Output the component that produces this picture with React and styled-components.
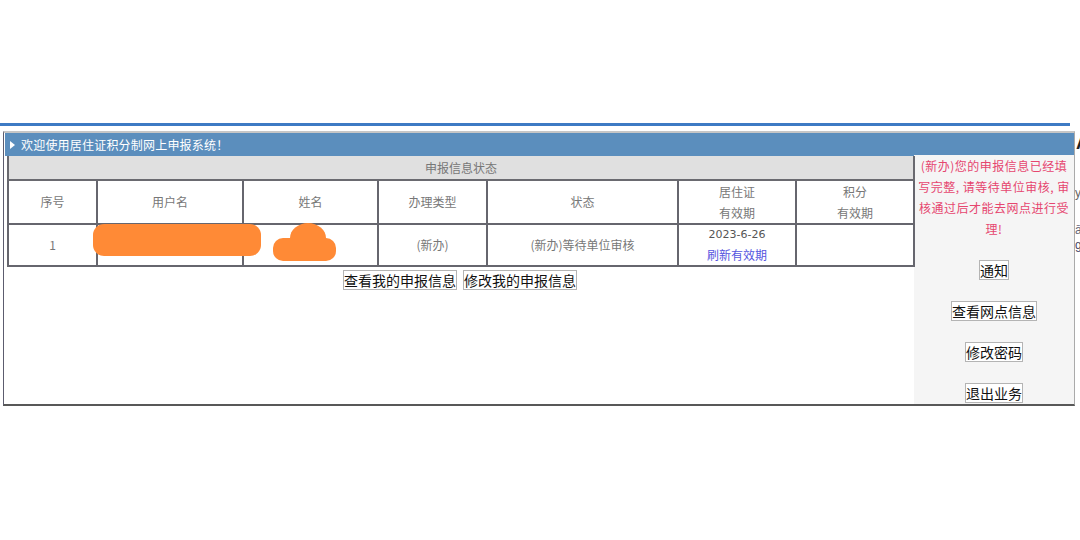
import React from "react";
import styled, { createGlobalStyle } from "styled-components";

const Global = createGlobalStyle`
  html, body { margin: 0; padding: 0; background: #ffffff; }
  body { font-family: "Noto Sans CJK SC", "DejaVu Sans", sans-serif; }
  * { box-sizing: border-box; }
`;

const Page = styled.div`
  width: 1080px;
  height: 540px;
  padding-top: 123px;
  overflow: hidden;
`;

const TopRule = styled.div`
  width: 1070px;
  height: 3px;
  background: #3d7ac4;
`;

const FrameRow = styled.div`
  display: flex;
  align-items: flex-start;
  margin-top: 5px;
`;

const Frame = styled.div`
  margin-left: 3px;
  width: 1072px;
  border-left: 1px solid #5c5c6e;
  border-right: 1px solid #aaaaaa;
  border-top: 2px solid #c6c6c6;
  border-bottom: 2px solid #585858;
  padding-left: 1px;
`;

const Edge = styled.div`
  width: 5px;
  height: 290px;
  overflow: hidden;
  position: relative;
  font-family: "Liberation Sans", sans-serif;
`;

const EdgeGlyph = styled.span`
  position: absolute;
  left: ${(p) => p.$x}px;
  top: ${(p) => p.$y}px;
  font-size: ${(p) => p.$size}px;
  color: ${(p) => p.$color};
  font-weight: ${(p) => (p.$bold ? 700 : 400)};
`;

const HeaderBar = styled.div`
  height: 23px;
  background: #5b8ebd;
  color: #ffffff;
  font-size: 12px;
  letter-spacing: 0.2px;
  display: flex;
  align-items: center;
  padding-left: 5px;
  gap: 6px;
`;

const Arrow = styled.span`
  width: 0;
  height: 0;
  border-top: 4px solid transparent;
  border-bottom: 4px solid transparent;
  border-left: 5px solid #ffffff;
`;

const Body = styled.div`
  display: flex;
  height: 248px;
`;

const Main = styled.div`
  width: 909px;
  padding-left: 2px;
  display: flex;
  flex-direction: column;
`;

const TableWrap = styled.div`
  position: relative;
  width: 906px;
`;

const Table = styled.table`
  width: 906px;
  border-collapse: collapse;
  table-layout: fixed;
  font-size: 12px;
  color: #777777;
  text-align: center;
`;

const TitleCell = styled.td`
  height: 24px;
  background: #e0e0e0;
  border: 2px solid #6a6a70;
  border-top: none;
  padding: 0;
  line-height: 20px;
`;

const Cell = styled.td`
  height: ${(p) => p.$h}px;
  border: 2px solid #66666e;
  padding: 0;
  line-height: ${(p) => p.$lh || 20}px;
  color: ${(p) => p.$color || "#777777"};
`;

const DateText = styled.div`
  color: #555555;
  font-family: "DejaVu Sans", sans-serif;
  font-size: 11px;
  line-height: 20px;
`;

const RefreshLink = styled.a`
  display: block;
  color: #5555e0;
  text-decoration: none;
  line-height: 20px;
  cursor: pointer;
`;

const Redaction = styled.div`
  position: absolute;
  left: ${(p) => p.$l}px;
  top: ${(p) => p.$t}px;
  width: ${(p) => p.$w}px;
  height: ${(p) => p.$h}px;
  border-radius: ${(p) => p.$r};
  background: #ff8a36;
`;

const ActionRow = styled.div`
  width: 906px;
  display: flex;
  justify-content: center;
  gap: 6px;
  margin-top: 3px;
`;

const Btn = styled.button`
  font-family: "Noto Sans CJK SC", sans-serif;
  font-size: 14px;
  height: 20px;
  line-height: 18px;
  padding: 0;
  border: 1px solid #b4b4b4;
  background: #ffffff;
  color: #111111;
  border-radius: 0;
`;

const Panel = styled.div`
  width: 160px;
  margin-top: -1px;
  background: #f5f5f5;
  display: flex;
  flex-direction: column;
  align-items: center;
`;

const Notice = styled.p`
  margin: 0;
  width: 160px;
  text-align: center;
  color: #e6466f;
  font-size: 12px;
  letter-spacing: 0.5px;
  line-height: 21px;
  white-space: nowrap;
`;

const PanelButtons = styled.div`
  margin-top: 21px;
  display: flex;
  flex-direction: column;
  align-items: center;
  gap: 21px;
`;

export default function App() {
  return (
    <Page>
      <Global />
      <TopRule />
      <FrameRow>
        <Frame>
          <HeaderBar>
            <Arrow />
            <span>欢迎使用居住证积分制网上申报系统！</span>
          </HeaderBar>
          <Body>
            <Main>
              <TableWrap>
                <Table>
                  <colgroup>
                    <col style={{ width: 89 }} />
                    <col style={{ width: 146 }} />
                    <col style={{ width: 135 }} />
                    <col style={{ width: 109 }} />
                    <col style={{ width: 191 }} />
                    <col style={{ width: 118 }} />
                    <col style={{ width: 118 }} />
                  </colgroup>
                  <tbody>
                    <tr>
                      <TitleCell colSpan={7}>申报信息状态</TitleCell>
                    </tr>
                    <tr>
                      <Cell $h={42}>序号</Cell>
                      <Cell $h={42}>用户名</Cell>
                      <Cell $h={42}>姓名</Cell>
                      <Cell $h={42}>办理类型</Cell>
                      <Cell $h={42}>状态</Cell>
                      <Cell $h={42} $lh={21}>
                        居住证
                        <br />
                        有效期
                      </Cell>
                      <Cell $h={42} $lh={21}>
                        积分
                        <br />
                        有效期
                      </Cell>
                    </tr>
                    <tr>
                      <Cell $h={41}>1</Cell>
                      <Cell $h={41}></Cell>
                      <Cell $h={41}></Cell>
                      <Cell $h={41}>(新办)</Cell>
                      <Cell $h={41}>(新办)等待单位审核</Cell>
                      <Cell $h={41}>
                        <DateText>2023-6-26</DateText>
                        <RefreshLink>刷新有效期</RefreshLink>
                      </Cell>
                      <Cell $h={41}></Cell>
                    </tr>
                  </tbody>
                </Table>
                <Redaction $l={86} $t={68} $w={168} $h={32} $r="11px" />
                <Redaction $l={283} $t={67} $w={36} $h={30} $r="50%" />
                <Redaction $l={266} $t={82} $w={63} $h={23} $r="10px" />
              </TableWrap>
              <ActionRow>
                <Btn>查看我的申报信息</Btn>
                <Btn>修改我的申报信息</Btn>
              </ActionRow>
            </Main>
            <Panel>
              <Notice>
                (新办)您的申报信息已经填
                <br />
                写完整, 请等待单位审核, 审
                <br />
                核通过后才能去网点进行受
                <br />
                理!
              </Notice>
              <PanelButtons>
                <Btn>通知</Btn>
                <Btn>查看网点信息</Btn>
                <Btn>修改密码</Btn>
                <Btn>退出业务</Btn>
              </PanelButtons>
            </Panel>
          </Body>
        </Frame>
        <Edge>
          <EdgeGlyph $x={1} $y={2} $size={18} $color="#222" $bold>A</EdgeGlyph>
          <EdgeGlyph $x={0} $y={55} $size={12} $color="#666">y</EdgeGlyph>
          <EdgeGlyph $x={0} $y={92} $size={12} $color="#667">ā</EdgeGlyph>
          <EdgeGlyph $x={0} $y={107} $size={12} $color="#446">g</EdgeGlyph>
        </Edge>
      </FrameRow>
    </Page>
  );
}
